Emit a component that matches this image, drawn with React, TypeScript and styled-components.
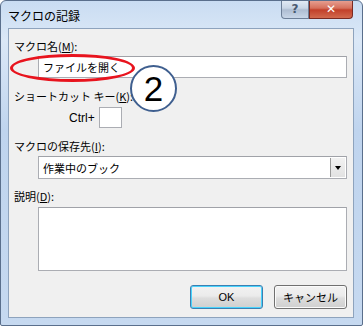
import styled, { createGlobalStyle } from 'styled-components'

const GlobalStyle = createGlobalStyle`
  html, body {
    margin: 0;
    padding: 0;
    background: #ffffff;
  }
  body {
    font-family: "Noto Sans CJK JP", "Noto Sans", sans-serif;
  }
`

const Frame = styled.div`
  position: relative;
  width: 363px;
  height: 326px;
  box-sizing: border-box;
  border: 1px solid #5a6f8c;
  border-radius: 6px 6px 2px 2px;
  background: linear-gradient(180deg, #c9dcf2 0%, #dbe8f7 12%, #bfd4ee 40%, #c6d9f0 100%);
  display: flex;
  flex-direction: column;
  overflow: hidden;
`

const TitleBar = styled.div`
  height: 27px;
  display: flex;
  align-items: flex-start;
  justify-content: space-between;
  padding-left: 7px;
`

const Title = styled.div`
  font-size: 12px;
  line-height: 14px;
  margin-top: 8px;
  color: #000000;
`

const TitleButtons = styled.div`
  display: flex;
  margin-right: 9px;
  margin-top: -1px;
`

const CaptionBtn = styled.div<{ $close?: boolean }>`
  width: ${(p) => (p.$close ? 44 : 28)}px;
  height: 19px;
  box-sizing: border-box;
  border: 1px solid ${(p) => (p.$close ? '#7a2a22' : '#6d7f98')};
  border-top: none;
  border-radius: ${(p) => (p.$close ? '0 0 4px 0' : '0 0 0 4px')};
  background: ${(p) =>
    p.$close
      ? 'linear-gradient(180deg, #e8a496 0%, #d6705c 45%, #c2402a 55%, #d26a4e 100%)'
      : 'linear-gradient(180deg, #e4ecf6 0%, #c9d6e6 45%, #aebdd2 55%, #c8d6e8 100%)'};
  display: flex;
  align-items: center;
  justify-content: center;
  color: ${(p) => (p.$close ? '#ffffff' : '#4a5a70')};
  font-family: "DejaVu Sans", sans-serif;
  font-weight: bold;
  font-size: 12px;
`

const Client = styled.div`
  position: relative;
  margin: 0 8px 7px 7px;
  flex: 1;
  background: #f0f0f0;
  border: 1px solid #8ea3bd;
  padding: 9px 6px 0 5px;
  display: flex;
  flex-direction: column;
  font-size: 11px;
  color: #000000;
`

const Label = styled.div<{ $gap: number }>`
  line-height: 16px;
  margin-top: ${(p) => p.$gap}px;
  u {
    text-decoration: underline;
  }
`

const Field = styled.div<{ $gap: number; $height: number }>`
  margin: ${(p) => p.$gap}px 0 0 24px;
  height: ${(p) => p.$height}px;
  box-sizing: border-box;
  background: #ffffff;
  border: 1px solid #abadb3;
  border-top-color: #a0a2a8;
  display: flex;
  align-items: center;
  padding-left: 4px;
`

const SelectArrow = styled.div`
  align-self: stretch;
  width: 15px;
  box-sizing: border-box;
  border-left: 1px solid #9a9a9a;
  background: linear-gradient(180deg, #f2f2f2 0%, #e2e2e2 100%);
  display: flex;
  align-items: center;
  justify-content: center;
  margin: 1px 1px 1px auto;
  &::after {
    content: '';
    border-left: 3px solid transparent;
    border-right: 3px solid transparent;
    border-top: 4px solid #000;
  }
`

const CtrlRow = styled.div`
  display: flex;
  align-items: center;
  margin: 3px 0 0 55px;
  gap: 4px;
  font-family: "Liberation Sans", "Noto Sans CJK JP", sans-serif;
  font-size: 12px;
`

const KeyBox = styled.div`
  width: 23px;
  height: 21px;
  box-sizing: border-box;
  background: #ffffff;
  border: 1px solid #abadb3;
`

const ButtonRow = styled.div`
  display: flex;
  justify-content: flex-end;
  gap: 11px;
  margin-top: 14px;
`

const Button = styled.div<{ $default?: boolean }>`
  width: 73px;
  height: 24px;
  box-sizing: border-box;
  border: 1px solid ${(p) => (p.$default ? '#3c7fb1' : '#707070')};
  border-radius: 3px;
  box-shadow: ${(p) => (p.$default ? 'inset 0 0 0 1px #48d3fd' : 'inset 0 0 0 1px #fbfbfb')};
  background: linear-gradient(180deg, #f2f2f2 0%, #ebebeb 45%, #dddddd 55%, #cfcfcf 100%);
  display: flex;
  align-items: center;
  justify-content: center;
  font-size: 11px;
  font-family: ${(p) => (p.$default ? '"Liberation Sans", sans-serif' : '"Noto Sans CJK JP", sans-serif')};
`

const RedOval = styled.div`
  position: absolute;
  left: 1px;
  top: 25px;
  width: 125px;
  height: 28px;
  box-sizing: border-box;
  border: 3px solid #e8141e;
  border-radius: 50%;
`

const StepBadge = styled.div`
  position: absolute;
  left: 121px;
  top: 36px;
  width: 47px;
  height: 47px;
  box-sizing: border-box;
  border: 2px solid #3f5f8f;
  border-radius: 50%;
  background: #ffffff;
  display: flex;
  align-items: center;
  justify-content: center;
  font-family: "Liberation Sans", sans-serif;
  font-size: 35px;
  line-height: 1;
  color: #000000;
`

export default function App() {
  return (
    <>
      <GlobalStyle />
      <Frame>
        <TitleBar>
          <Title>マクロの記録</Title>
          <TitleButtons>
            <CaptionBtn>?</CaptionBtn>
            <CaptionBtn $close>✕</CaptionBtn>
          </TitleButtons>
        </TitleBar>
        <Client>
          <Label $gap={0}>マクロ名(<u>M</u>):</Label>
          <Field $gap={2} $height={22}>ファイルを開く</Field>
          <Label $gap={10}>ショートカット キー(<u>K</u>):</Label>
          <CtrlRow>
            Ctrl+
            <KeyBox />
          </CtrlRow>
          <Label $gap={10}>マクロの保存先(<u>I</u>):</Label>
          <Field $gap={2} $height={23}>
            作業中のブック
            <SelectArrow />
          </Field>
          <Label $gap={9}>説明(<u>D</u>):</Label>
          <Field $gap={3} $height={64} />
          <ButtonRow>
            <Button $default>OK</Button>
            <Button>キャンセル</Button>
          </ButtonRow>
          <RedOval />
          <StepBadge>2</StepBadge>
        </Client>
      </Frame>
    </>
  )
}
